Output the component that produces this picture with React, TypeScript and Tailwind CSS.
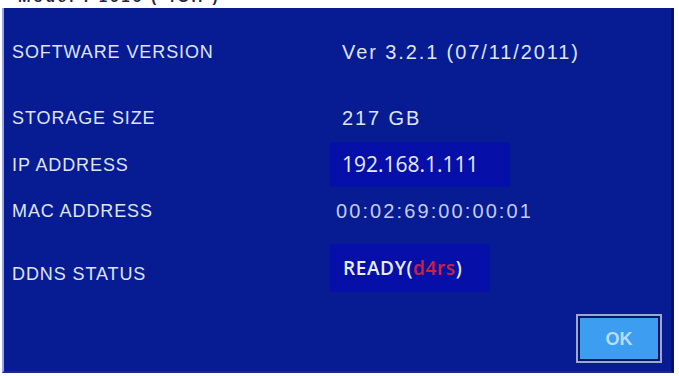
import React from "react";

const label = "text-[18px] tracking-[0.9px] text-[#dfe4f7] leading-none";
const value = "text-[20px] text-[#dfe4f7] leading-none";
const labelFont = { fontFamily: '"Liberation Sans", Arial, sans-serif' };

export default function App() {
  return (
    <div className="w-[679px] h-[376px] bg-white overflow-hidden" style={labelFont}>
      <div className="h-[8px] overflow-hidden pl-[18px]">
        <div className="-mt-[12px] text-[15px] tracking-[3px] text-[#1b2340] leading-[18px] font-bold">
          Model : 1616 ( 4CH )
        </div>
      </div>
      <div className="ml-[2px] w-[672px] h-[365px] border-l-[2px] border-l-[#9aa6d8] border-r-[3px] border-r-[#031063] border-b-[2px] border-b-[#1e2c80] bg-[#071b93] flex flex-col">
        <div className="flex items-center h-[40px] mt-[24px]">
          <div className={`w-[326px] pl-[8px] ${label}`}>SOFTWARE VERSION</div>
          <div className={`pl-[12px] tracking-[1.9px] ${value}`}>Ver 3.2.1 (07/11/2011)</div>
        </div>
        <div className="flex items-center h-[40px] mt-[26px]">
          <div className={`w-[326px] pl-[8px] ${label}`}>STORAGE SIZE</div>
          <div className={`pl-[12px] tracking-[1.9px] ${value}`}>217 GB</div>
        </div>
        <div className="flex items-center h-[45px] mt-[4px]">
          <div className={`w-[326px] pl-[8px] ${label}`}>IP ADDRESS</div>
          <div
            className="w-[180px] h-[45px] bg-[#0610a8] flex items-center pl-[12px] text-[21px] text-[#e8ecff] leading-none"
            style={{ fontFamily: '"Open Sans", sans-serif' }}
          >
            192.168.1.111
          </div>
        </div>
        <div className="flex items-center h-[40px] mt-[4px]">
          <div className={`w-[326px] pl-[8px] ${label}`}>MAC ADDRESS</div>
          <div className="pl-[6px] text-[20px] tracking-[2.1px] text-[#c4cdf0] leading-none">00:02:69:00:00:01</div>
        </div>
        <div className="flex items-center h-[50px] mt-[12px]">
          <div className={`w-[326px] pl-[8px] pt-[12px] ${label}`}>DDNS STATUS</div>
          <div
            className="w-[160px] h-[48px] bg-[#0610a8] flex items-center pl-[13px] text-[19px] font-semibold tracking-[0.6px] text-[#e8ecff] leading-none"
            style={{ fontFamily: '"Open Sans", sans-serif' }}
          >
            READY(<span className="text-[#d0203a]">d4rs</span>)
          </div>
        </div>
        <div className="flex justify-end pr-[9px] mt-[21px]">
          <div className="w-[86px] h-[49px] border-[2px] border-[#9aa8d4] bg-[#0a1660] p-[2px]">
            <div className="w-full h-full bg-[#3d9df0] flex items-center justify-center text-[18px] font-bold text-[#b8dcff] leading-none">
              OK
            </div>
          </div>
        </div>
      </div>
    </div>
  );
}
